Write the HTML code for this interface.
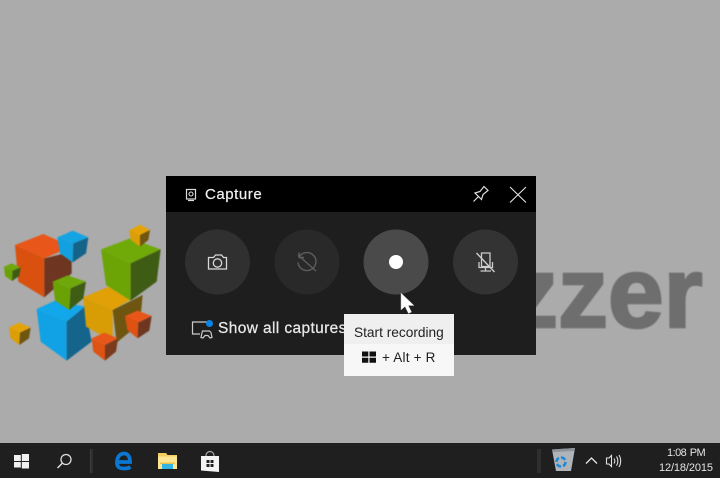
<!DOCTYPE html>
<html><head><meta charset="utf-8"><style>
html,body{margin:0;padding:0;background:#ababab}
#r{position:relative;width:720px;height:478px;overflow:hidden;background:#ababab;font-family:"Liberation Sans",sans-serif;filter:blur(.3px)}
#r>*{position:absolute}
.t{white-space:nowrap}
</style></head><body><div id="r">
<svg style="left:0;top:210px;filter:blur(.5px)" width="170" height="160" viewBox="0 0 510 480">
<polygon points="45,105 130,72 215,110 133,145" fill="#e8561a"/><polygon points="45,105 133,145 133,262 55,215" fill="#d9500f"/><polygon points="133,145 215,125 215,190 133,262" fill="#6e3620"/>
<polygon points="172,82 218,62 265,82 220,100" fill="#14a4e4"/><polygon points="172,82 220,100 218,157 180,130" fill="#12a0e0"/><polygon points="220,100 265,82 258,130 218,157" fill="#14648a"/>
<polygon points="12,170 35,160 62,172 38,182" fill="#6fa80a"/><polygon points="12,170 38,182 36,213 15,198" fill="#6aa206"/><polygon points="38,182 62,172 58,198 36,213" fill="#3f5c14"/>
<polygon points="110,297 165,272 255,290 200,335" fill="#12a6ea"/><polygon points="110,297 200,335 200,452 122,395" fill="#10a2e4"/><polygon points="200,335 255,290 275,395 200,452" fill="#14648c"/>
<polygon points="250,262 325,230 390,270 338,300" fill="#e0a006"/><polygon points="250,262 338,300 338,395 258,350" fill="#d89c04"/><polygon points="338,300 428,255 420,340 350,398" fill="#6e5610"/>
<polygon points="158,215 203,196 258,215 212,235" fill="#6fa80a"/><polygon points="158,215 212,235 208,300 165,272" fill="#6aa206"/><polygon points="212,235 258,215 250,265 208,300" fill="#3f5c14"/>
<polygon points="303,118 390,85 482,118 392,160" fill="#70aa08"/><polygon points="303,118 392,160 392,272 318,225" fill="#6ca406"/><polygon points="392,160 482,118 470,215 392,272" fill="#3f5c14"/>
<polygon points="387,62 420,44 450,60 420,75" fill="#e4a408"/><polygon points="387,62 420,75 420,110 393,90" fill="#dc9e06"/><polygon points="420,75 450,60 445,90 420,110" fill="#70560e"/>
<polygon points="375,318 413,302 455,318 415,338" fill="#e8561a"/><polygon points="375,318 415,338 413,385 382,360" fill="#de5212"/><polygon points="415,338 455,318 448,362 413,385" fill="#6e3620"/>
<polygon points="275,385 313,368 354,385 315,405" fill="#e8561a"/><polygon points="275,385 315,405 315,452 280,425" fill="#de5212"/><polygon points="315,405 354,385 348,425 315,452" fill="#7a3a1c"/>
<polygon points="27,352 58,338 92,353 60,368" fill="#e4a408"/><polygon points="27,352 60,368 58,405 32,385" fill="#dc9e06"/><polygon points="60,368 92,353 87,385 58,405" fill="#6e5610"/>
</svg>
<div class="t" style="left:508px;top:236px;font-size:100px;line-height:115px;font-weight:bold;color:#6e6e6e;-webkit-text-stroke:2.500px #6e6e6e;filter:blur(.5px)">zzer</div>

<div style="left:166px;top:176px;width:370px;height:179px;background:#1e1e1e"></div>
<div style="left:166px;top:176px;width:370px;height:36px;background:#000"></div>
<div class="t" style="left:205px;top:186px;font-size:15px;line-height:18px;color:#f0f0f0;letter-spacing:.55px;-webkit-text-stroke:.2px #f0f0f0">Capture</div>
<svg style="left:166px;top:176px" width="370" height="180" fill="none" stroke="#fff">
<rect x="20.500" y="13.500" width="9" height="9.500" stroke-width="1.200" stroke="#ddd"/><circle cx="25" cy="18" r="2" stroke-width="1.100" stroke="#ddd"/><path d="M22 24.500h6" stroke-width="1.200" stroke="#ddd"/>
<path d="M307.500 25.500L313 20M309 17l5-1.500 4-5 4 4-5 4-1.500 5z" stroke="#ddd" stroke-width="1.200"/>
<path d="M344 11l16 15.500M360 11l-16 15.500" stroke="#e4e4e4" stroke-width="1.100"/>
<circle cx="51.500" cy="86" r="32.500" fill="#303030" stroke="none"/>
<circle cx="141" cy="86" r="32.500" fill="#292929" stroke="none"/>
<circle cx="230" cy="86" r="32.500" fill="#4a4a4a" stroke="none"/>
<circle cx="319.500" cy="86" r="32.500" fill="#333" stroke="none"/>
<path d="M42.500 93V81.500h5l2-2.500h6l2 2.500h3V93z" stroke="#d8d8d8" stroke-width="1.300"/><circle cx="51.500" cy="87" r="4.200" stroke="#d8d8d8" stroke-width="1.300"/>
<path d="M133.500 80.500a9 9 0 1 1-1.500 6M133 76.500v5h5" stroke="#5e5e5e" stroke-width="1.400"/><path d="M132 79l18 16" stroke="#5e5e5e" stroke-width="1.300"/>
<circle cx="230" cy="86" r="7" fill="#fff" stroke="none"/>
<path d="M315.500 77h8.500v13.500h-8.500zM313 86v5.500h13.500V86M319.500 92v2.500M314.500 95h10.500" stroke="#ccc" stroke-width="1.300"/><path d="M310.500 77l18 19" stroke="#ccc" stroke-width="1.400"/>
<path d="M34 158h-7.500v-12h15" stroke="#ccc" stroke-width="1.200"/><path d="M36.500 155h7l1.500 1.500 1 5-2 .5-2-2.500h-3l-2 2.500-2-.5 1-5z" stroke="#ccc" stroke-width="1.200"/>
<circle cx="43.500" cy="147.500" r="3.500" fill="#0a84e4" stroke="none"/>
</svg>
<div class="t" style="left:218px;top:319px;font-size:15.500px;line-height:19px;color:#e8e8e8;letter-spacing:.38px;-webkit-text-stroke:.25px #e8e8e8">Show all captures</div>

<div style="left:344px;top:314px;width:110px;height:62px;background:#f7f7f7"></div>
<div style="left:344px;top:314px;width:110px;height:30px;background:#efefef"></div>
<div class="t" style="left:354px;top:324px;font-size:13.700px;line-height:17px;color:#222">Start recording</div>
<svg style="left:362px;top:350px" width="14" height="14"><path d="M0 1.500h6.300v5H0zM7.500 1.500H14v5H7.500zM0 7.700h6.300v5H0zM7.500 7.700H14v5H7.500z" fill="#111"/></svg>
<div class="t" style="left:382px;top:349px;font-size:13.500px;line-height:17px;color:#222;letter-spacing:.2px">+ Alt + R</div>
<svg style="left:400px;top:292px" width="16" height="24"><path d="M1 1v17l4-3.500 3.500 7 3-1.500-3.200-6.500H14z" fill="#fff" stroke="#bbb" stroke-width=".5"/></svg>

<div style="left:0;top:443px;width:720px;height:35px;background:#1f1f1f"></div>
<svg style="left:0;top:443px" width="720" height="35" fill="none">
<path d="M14 12h6.800v6H14zM21.800 11H29v7h-7.200zM14 19h6.800v5.500H14zM21.800 19H29v6.500h-7.200z" fill="#f0f0f0"/>
<circle cx="66" cy="16.500" r="5" stroke="#ddd" stroke-width="1.300"/><path d="M62.500 20L57.500 25" stroke="#ddd" stroke-width="1.500"/>
<path d="M90.500 6v24M92 6v24" stroke="#3c3c3c"/>
<path d="M117.500 19h12.500c0-5-2-8.500-6-8.500-4.500 0-7 4-7 9 0 5 3 6 7 6 2.500 0 5-.5 6.500-1.500" stroke="#0a78d2" stroke-width="3.800"/>
<path d="M158 10h8l1.500 2H177v14h-19z" fill="#f4cf5e"/><path d="M158 13.500h19V26h-19z" fill="#fde594"/><path d="M162 21h11v5h-11z" fill="#35b4e4"/><path d="M160 19.500h15v1.500h-15z" fill="#e8c24e"/>
<path d="M201 13h18v16l-18-1.500z" fill="#f4f4f4"/><path d="M206 13c0-6 8-6 8 0" stroke="#aaa" stroke-width="1.200"/><path d="M206.500 17h3v3h-3zM210.500 17h3v3h-3zM206.500 21h3v3h-3zM210.500 21h3v3h-3z" fill="#222"/>
<path d="M538 6v24M540 6v24" stroke="#3c3c3c"/>
<path d="M552 6.500l23-1.500-4 23h-15z" fill="#aeb4ba"/><path d="M552 6.500l23-1.500-1 3-21 1z" fill="#8e9498"/><circle cx="561" cy="19" r="4.500" stroke="#1e88d8" stroke-width="2.500" stroke-dasharray="5 2"/>
<path d="M586 20.500l5.500-5.500 5.500 5.500" stroke="#e8e8e8" stroke-width="1.300"/>
<path d="M606.500 15v6h2.500l2.500 2.500v-11L609 15zM614 15.500c1 1.500 1 3.500 0 5M616.500 13.500c1.800 2.500 1.800 6.500 0 9M619 12c2.200 3.500 2.200 8.500 0 12" stroke="#e0e0e0" stroke-width="1.100"/>
</svg>
<div class="t" style="left:667px;top:446px;font-size:11px;line-height:14px;color:#e4e4e4;letter-spacing:-.55px;word-spacing:1px">1:08 PM</div>
<div class="t" style="left:659px;top:461px;font-size:11px;line-height:14px;color:#e4e4e4;letter-spacing:-.12px">12/18/2015</div>
</div></body></html>
